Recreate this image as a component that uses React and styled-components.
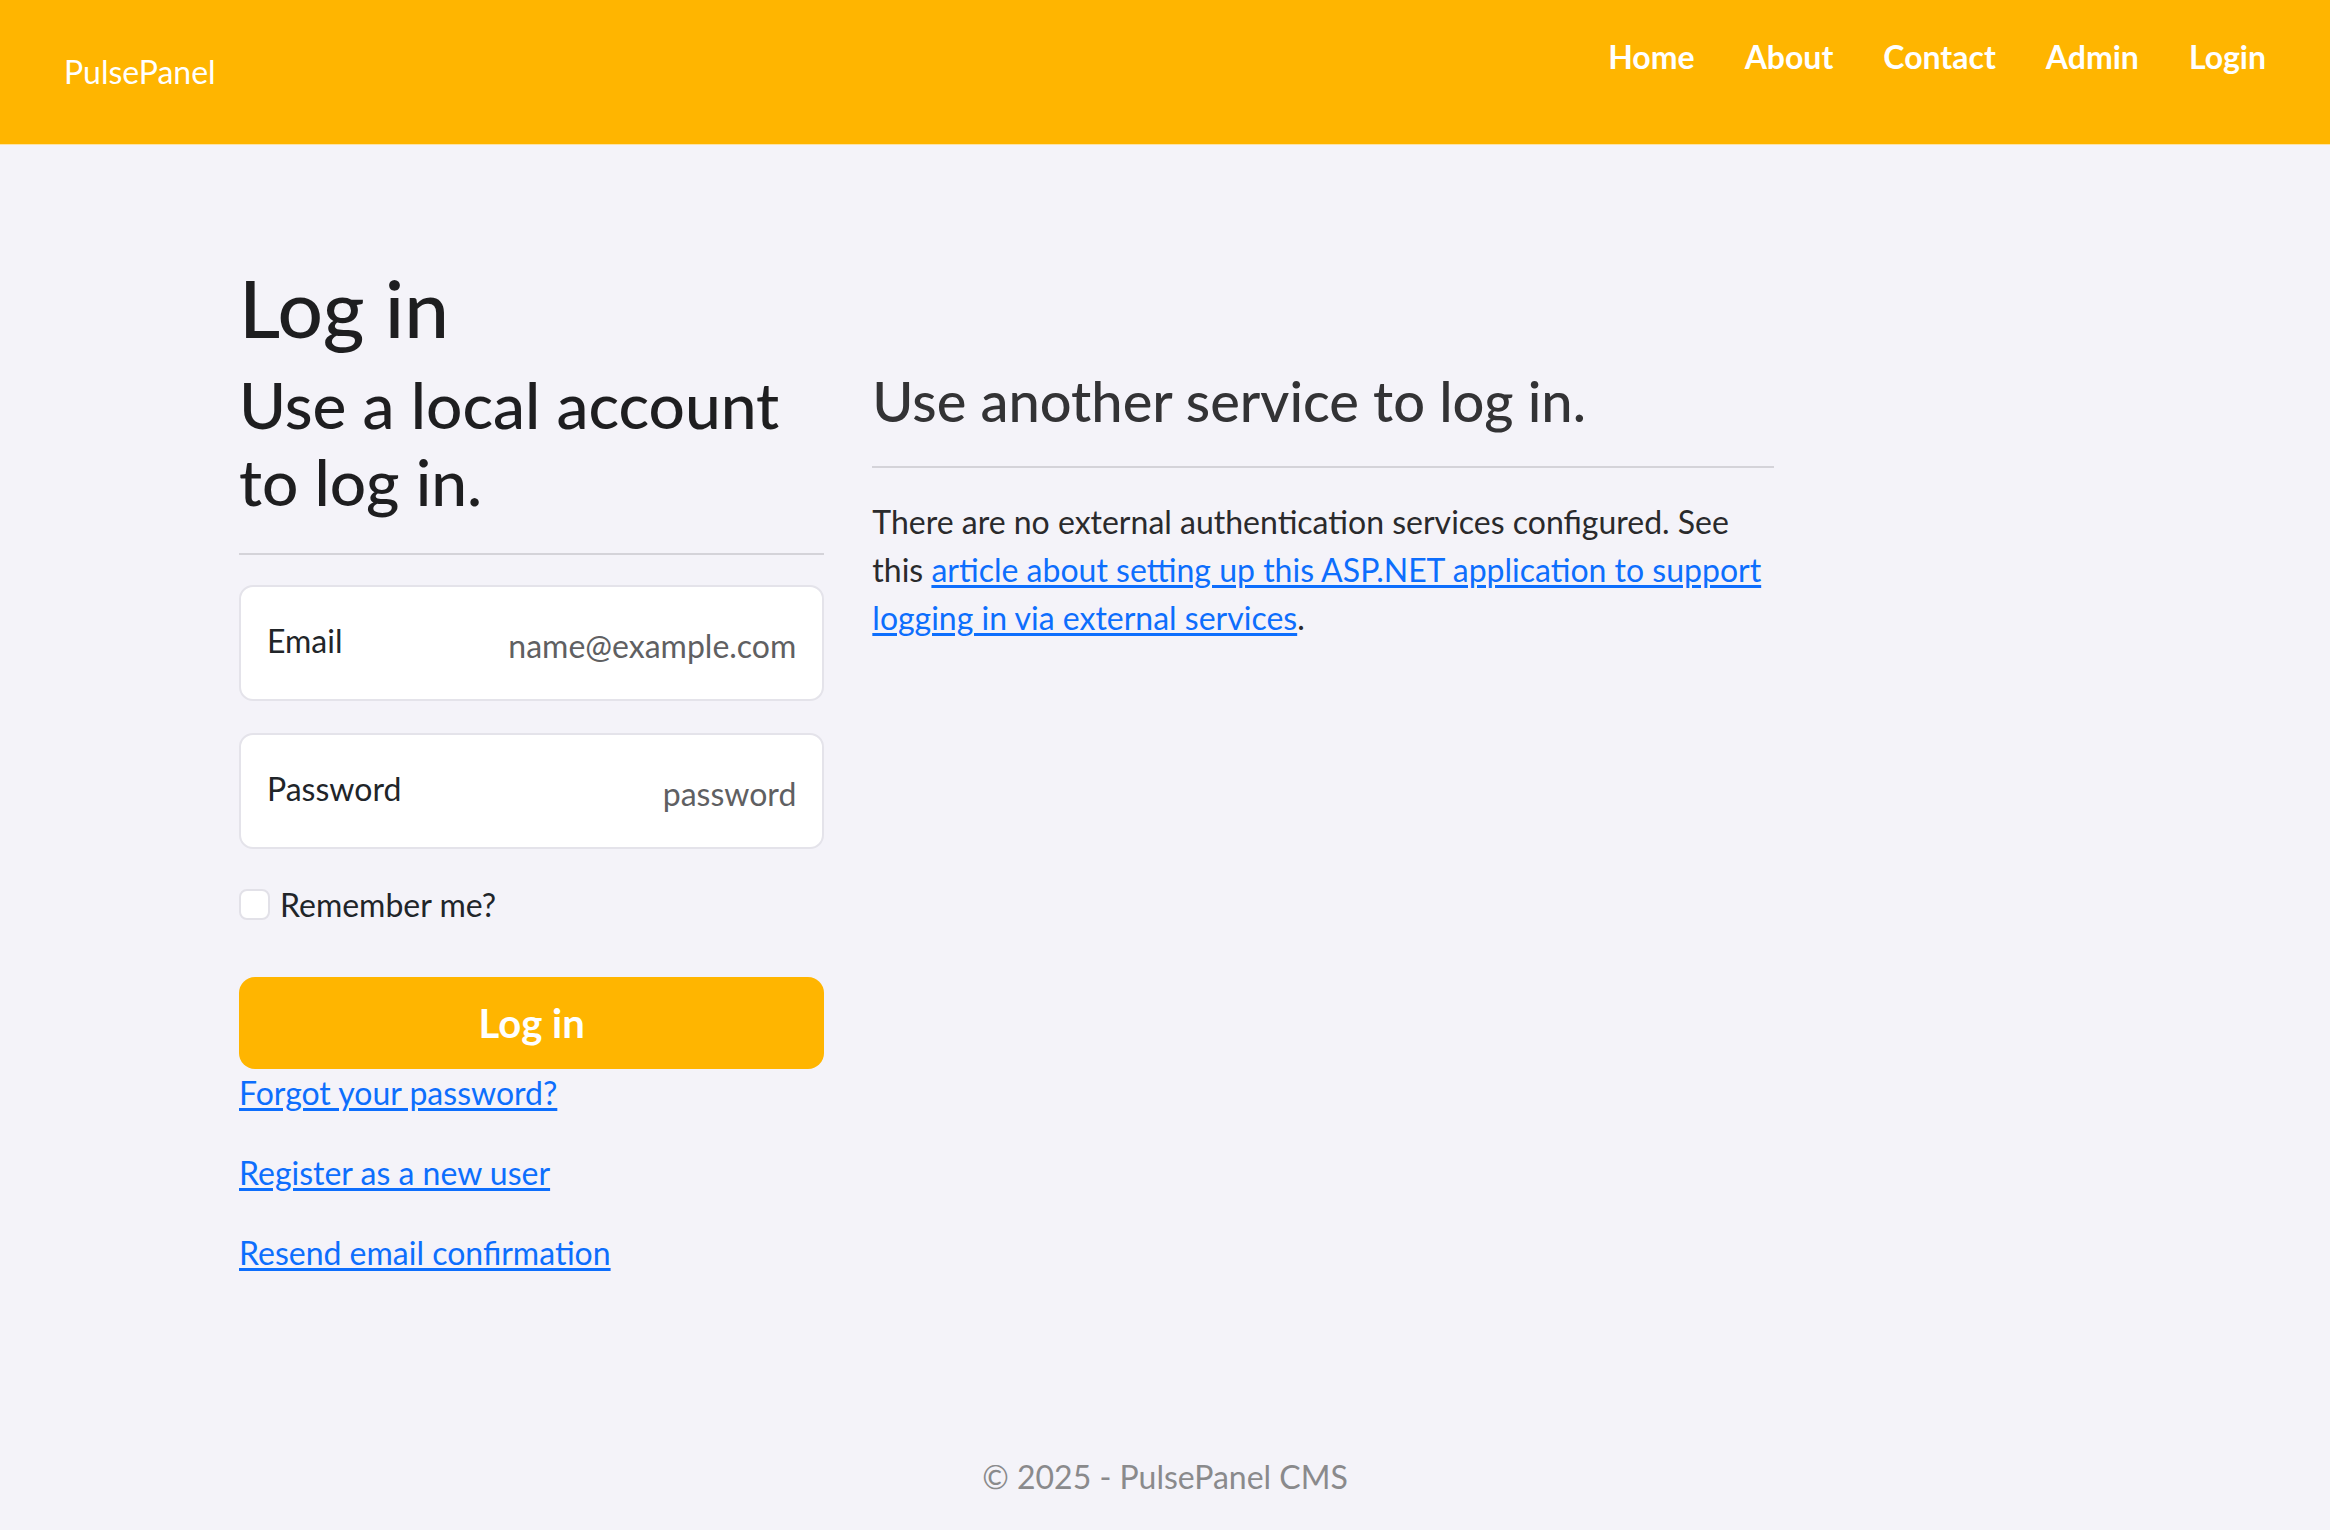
import styled, { createGlobalStyle } from "styled-components";

const GlobalStyle = createGlobalStyle`
  html, body {
    margin: 0;
    padding: 0;
    background: #f4f3f9;
    font-family: Lato, "Segoe UI", sans-serif;
    color: #212529;
  }
  * { box-sizing: border-box; }
`;

const Shell = styled.div`
  min-height: 100vh;
  display: flex;
  flex-direction: column;
`;

const Navbar = styled.header`
  height: 145px;
  background: #ffb500;
  border-bottom: 1px solid #fde3a6;
  display: flex;
  justify-content: space-between;
  align-items: center;
  padding: 0 64px 0 64px;
`;

const Brand = styled.a`
  font-size: 32px;
  line-height: 48px;
  font-weight: 400;
  color: #fff;
  text-decoration: none;
`;

const NavList = styled.nav`
  align-self: flex-start;
  display: flex;
  gap: 50px;
  padding-top: 33px;
`;

const NavLink = styled.a`
  font-size: 32px;
  line-height: 48px;
  font-weight: 700;
  color: #fff;
  text-decoration: none;
`;

const Main = styled.main`
  flex: 1;
  width: 100%;
  max-width: 1900px;
  margin: 0 auto;
  padding: 114px 24px 0;
`;

const PageTitle = styled.h1`
  margin: 0 0 12px;
  font-size: 80px;
  line-height: 96px;
  font-weight: 500;
  color: #1e1e20;
`;

const Row = styled.div`
  display: grid;
  grid-template-columns: minmax(0, 4fr) minmax(0, 6fr) minmax(0, 2fr);
  margin: 0 -24px;
`;

const Col = styled.section`
  padding: 0 24px;
  min-width: 0;
`;

const SectionTitle = styled.h2`
  margin: 0 0 16px;
  font-size: ${(p) => p.$size}px;
  line-height: 1.2;
  font-weight: 500;
  color: ${(p) => p.$color};
`;

const Rule = styled.hr`
  margin: 32px 0 30px;
  border: 0;
  border-top: 2px solid #d4d3d9;
`;

const Field = styled.label`
  height: 116px;
  margin-bottom: 32px;
  padding: 0 26px;
  display: flex;
  align-items: center;
  background: #fff;
  border: 2px solid #e4e3ea;
  border-radius: 14px;
`;

const FieldLabel = styled.span`
  font-size: 32px;
  color: #212529;
  padding-bottom: 4px;
`;

const FieldInput = styled.input`
  flex: 1;
  min-width: 0;
  width: 0;
  border: 0;
  outline: none;
  background: transparent;
  text-align: right;
  font-family: inherit;
  font-size: 32px;
  color: #212529;
  padding: 6px 0 0;
  &::placeholder {
    color: #5f6062;
  }
`;

const CheckRow = styled.label`
  display: flex;
  align-items: center;
  gap: 10px;
  height: 48px;
  margin-bottom: 48px;
  font-size: 32px;
  color: #212529;
`;

const CheckBox = styled.span`
  width: 31px;
  height: 31px;
  background: #fff;
  border: 2px solid #e2e1e8;
  border-radius: 8px;
`;

const SubmitButton = styled.button`
  display: block;
  width: 100%;
  height: 92px;
  border: 0;
  border-radius: 16px;
  background: #ffb500;
  color: #fff;
  font-family: inherit;
  font-size: 40px;
  font-weight: 700;
  cursor: pointer;
`;

const LinkLine = styled.p`
  margin: 0 0 32px;
  font-size: 32px;
  line-height: 48px;
`;

const TextLink = styled.a`
  color: #0d6efd;
  text-decoration: underline;
  text-underline-offset: 3px;
`;

const Paragraph = styled.p`
  margin: 0;
  font-size: 32px;
  line-height: 48px;
  color: #2a2a2c;
`;

const Footer = styled.footer`
  height: 120px;
  padding-top: 14px;
  line-height: 106px;
  text-align: center;
  font-size: 32px;
  color: #8a8a8c;
`;

const navItems = ["Home", "About", "Contact", "Admin", "Login"];
const accountLinks = ["Forgot your password?", "Register as a new user", "Resend email confirmation"];

export default function App() {
  return (
    <Shell>
      <GlobalStyle />
      <Navbar>
        <Brand href="#">PulsePanel</Brand>
        <NavList>
          {navItems.map((item) => (
            <NavLink key={item} href="#">{item}</NavLink>
          ))}
        </NavList>
      </Navbar>

      <Main>
        <PageTitle>Log in</PageTitle>
        <Row>
          <Col>
            <SectionTitle $size={64} $color="#1e1e20">Use a local account to log in.</SectionTitle>
            <Rule />
            <Field>
              <FieldLabel>Email</FieldLabel>
              <FieldInput type="email" placeholder="name@example.com" />
            </Field>
            <Field>
              <FieldLabel>Password</FieldLabel>
              <FieldInput type="password" placeholder="password" />
            </Field>
            <CheckRow>
              <CheckBox />
              Remember me?
            </CheckRow>
            <SubmitButton type="button">Log in</SubmitButton>
            {accountLinks.map((text) => (
              <LinkLine key={text}>
                <TextLink href="#">{text}</TextLink>
              </LinkLine>
            ))}
          </Col>
          <Col>
            <SectionTitle $size={56} $color="#333335">Use another service to log in.</SectionTitle>
            <Rule />
            <Paragraph>
              There are no external authentication services configured. See this{" "}
              <TextLink href="#">article about setting up this ASP.NET application to support logging in via external services</TextLink>.
            </Paragraph>
          </Col>
        </Row>
      </Main>

      <Footer>© 2025 - PulsePanel CMS</Footer>
    </Shell>
  );
}
